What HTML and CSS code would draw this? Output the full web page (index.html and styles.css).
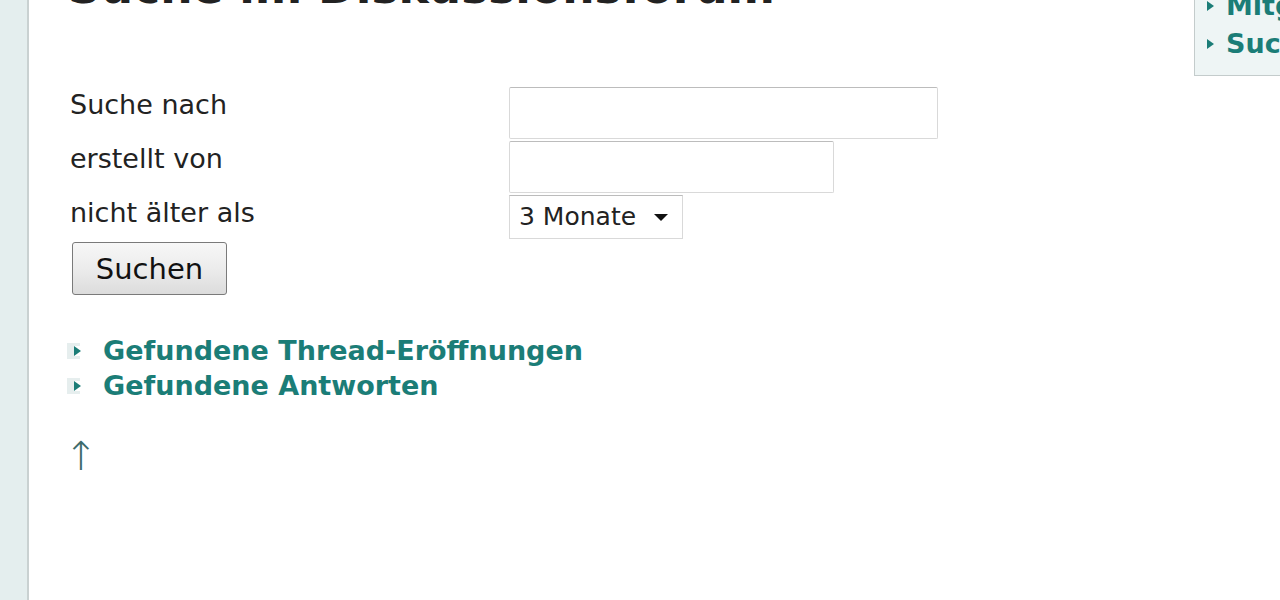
FILE: index.html
```html
<!DOCTYPE html>
<html lang="de">
  <head>
    <meta charset="utf-8" />
    <meta name="viewport" content="width=device-width, initial-scale=1.0" />
    <title>Suche im Diskussionsforum</title>
    <link rel="stylesheet" href="styles.css">
  </head>

  <body>
    <div class="page">
      <aside class="leiste"></aside>

      <main class="inhalt">
        <h1>Suche im Diskussionsforum</h1>

        <form class="suche">
          <label for="q">Suche nach</label>
          <input type="text" id="q" class="feld-lang" />

          <label for="von">erstellt von</label>
          <input type="text" id="von" class="feld-kurz" />

          <label for="alter">nicht älter als</label>
          <div class="auswahl" id="alter">3 Monate <span class="pfeil"></span></div>

          <button type="button">Suchen</button>
        </form>

        <ul class="treffer">
          <li><a href="#">Gefundene Thread-Eröffnungen</a></li>
          <li><a href="#">Gefundene Antworten</a></li>
        </ul>

        <a href="#" class="nach-oben">&uarr;</a>
      </main>

      <nav class="menue">
        <a href="#">Mitglieder</a>
        <a href="#">Suche</a>
      </nav>
    </div>
  </body>
</html>
```

FILE: styles.css
```css
body {
  margin: 0;
  font-family: "DejaVu Sans", Verdana, sans-serif;
  color: #222;
  background: white;
  overflow: hidden;
}

.page {
  display: flex;
  height: 600px;
  position: relative;
  overflow: hidden;
}

.leiste {
  width: 27px;
  flex-shrink: 0;
  background-color: #e4eeee;
  border-right: 2px solid #c9d1d1;
}

.inhalt {
  flex: 1;
  padding-left: 39px;
}

h1 {
  margin: -39px 0 0 0;
  font-size: 45.5px;
  line-height: 54px;
  color: #222;
  white-space: nowrap;
}

.suche {
  display: grid;
  grid-template-columns: 441px auto;
  grid-auto-rows: 54px;
  margin-top: 72px;
  align-items: start;
}

.suche label {
  font-size: 27px;
  line-height: 36px;
  padding-left: 2px;
}

.suche input {
  height: 52px;
  box-sizing: border-box;
  border: 1px solid #d9d9d9;
  border-top-color: #bcbcbc;
  border-radius: 2px;
  font-size: 25px;
}

.feld-lang {
  width: 429px;
}

.feld-kurz {
  width: 325px;
}

.auswahl {
  width: 174px;
  height: 44px;
  box-sizing: border-box;
  border: 1px solid #d9d9d9;
  border-top-color: #bcbcbc;
  font-size: 25px;
  line-height: 30px;
  padding: 6px 0 0 9px;
  display: flex;
  align-items: flex-start;
  gap: 18px;
}

.pfeil {
  margin-top: 12px;
  width: 0;
  height: 0;
  border-left: 7px solid transparent;
  border-right: 7px solid transparent;
  border-top: 7px solid #111;
}

.suche button {
  grid-column: 1;
  margin: -7px 0 0 4px;
  width: 155px;
  height: 53px;
  font-family: "DejaVu Sans", Verdana, sans-serif;
  font-size: 29px;
  color: #111;
  padding: 0;
  border: 1px solid #7a7a7a;
  border-radius: 3px;
  background: linear-gradient(#f7f7f7 0%, #ececec 50%, #dcdcdc 100%);
}

.treffer {
  list-style: none;
  margin: 30px 0 0 0;
  padding: 0;
}

.treffer li {
  line-height: 35px;
  display: flex;
  align-items: center;
}

.treffer li::before {
  content: "";
  width: 0;
  height: 0;
  margin: 0 22px 0 6px;
  border-top: 5px solid transparent;
  border-bottom: 5px solid transparent;
  border-left: 7px solid #1b7d77;
  box-shadow: -4px 0 0 3px #e6eeee;
}

.treffer a,
.menue a {
  color: #1b7d77;
  font-weight: bold;
  text-decoration: none;
  font-size: 27px;
}

.nach-oben {
  display: inline-block;
  margin: 30px 0 0 -4px;
  color: #3d6b6b;
  text-decoration: none;
  font-size: 40px;
  font-weight: 200;
}

.menue {
  position: absolute;
  top: -18px;
  left: 1194px;
  width: 120px;
  padding: 4px 0 12px 12px;
  background: #eef5f5;
  border: 1px solid #c4cccc;
  display: flex;
  flex-direction: column;
}

.menue a {
  display: flex;
  align-items: center;
  gap: 12px;
  line-height: 38px;
  white-space: nowrap;
}

.menue a::before {
  content: "";
  border-top: 5px solid transparent;
  border-bottom: 5px solid transparent;
  border-left: 7px solid #1b7d77;
}
```
